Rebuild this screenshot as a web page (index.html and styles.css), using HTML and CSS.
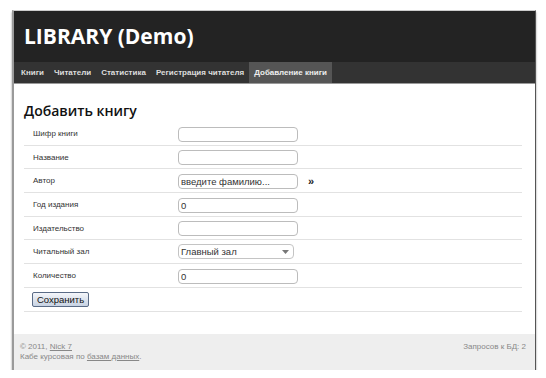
FILE: index.html
```html
<!DOCTYPE html>
<html>

<head>
	<meta charset="utf-8">
	<title>LIBRARY (Demo)</title>
	<link rel="stylesheet" href="styles.css">
</head>

<body>
	<div class="page">
		<div class="header">
			<h1>LIBRARY (Demo)</h1>
		</div>
		<ul class="menu">
			<li><a href="#">Книги</a></li>
			<li><a href="#">Читатели</a></li>
			<li><a href="#">Статистика</a></li>
			<li><a href="#">Регистрация читателя</a></li>
			<li class="active"><a href="#">Добавление книги</a></li>
		</ul>

		<div class="content">
			<h2>Добавить книгу</h2>
			<form>
				<table class="form">
					<tr>
						<td class="label">Шифр книги</td>
						<td><input type="text" class="field"></td>
					</tr>
					<tr>
						<td class="label">Название</td>
						<td><input type="text" class="field"></td>
					</tr>
					<tr>
						<td class="label">Автор</td>
						<td><input type="text" class="field" value="введите фамилию..."><span class="more">»</span></td>
					</tr>
					<tr>
						<td class="label">Год издания</td>
						<td><input type="text" class="field" value="0"></td>
					</tr>
					<tr>
						<td class="label">Издательство</td>
						<td><input type="text" class="field"></td>
					</tr>
					<tr>
						<td class="label">Читальный зал</td>
						<td>
							<div class="select">
								<span>Главный зал</span>
								<svg width="7" height="4" viewBox="0 0 7 4"><path d="M0 0h7L3.5 4z" fill="#777"/></svg>
							</div>
						</td>
					</tr>
					<tr>
						<td class="label">Количество</td>
						<td><input type="text" class="field" value="0"></td>
					</tr>
					<tr>
						<td class="label btn-cell" colspan="2"><button type="button" class="save">Сохранить</button></td>
					</tr>
				</table>
			</form>
		</div>

		<div class="footer">
			<div class="left">
				© 2011, <a href="#">Nick 7</a><br>
				Кабе курсовая по <a href="#">базам данных</a>.
			</div>
			<div class="right">Запросов к БД: 2</div>
		</div>
	</div>
</body>

</html>
```

FILE: styles.css
```css
body {
	margin: 0;
	background-color: white;
	font-family: 'Liberation Sans', Arial, sans-serif;
}

.page {
	width: 521px;
	margin: 10px 0 0 12px;
	border-left: 2px solid #9a9a9a;
	border-right: 1px solid #555;
	border-top: 1px solid #ccc;
	box-shadow: 0 2px 2px #999;
}

.header {
	background-color: #232323;
	height: 51px;
	padding-left: 10px;
}

h1 {
	margin: 0;
	font-family: 'Open Sans', sans-serif;
	font-weight: bold;
	font-size: 21px;
	line-height: 51px;
	color: white;
}

.menu {
	display: flex;
	margin: 0;
	padding: 0 0 0 2px;
	list-style: none;
	height: 21px;
	background-color: #333;
	border-bottom: 1px solid #999;
}

.menu a {
	display: block;
	padding: 0 5px;
	line-height: 21px;
	font-size: 8px;
	font-weight: bold;
	color: #ddd;
	text-decoration: none;
}

.menu .active a {
	background-color: #555;
	color: #eee;
}

.content {
	padding: 18px 13px 22px 10px;
}

h2 {
	margin: 0 0 2px 0;
	font-family: 'Open Sans', sans-serif;
	font-weight: 600;
	font-size: 14px;
	line-height: 18px;
	color: #111;
}

.form {
	width: 100%;
	border-collapse: collapse;
}

.form td {
	height: 22.7px;
	padding: 0;
	border-bottom: 1px solid #e2e2e2;
	vertical-align: middle;
}

.label {
	width: 145px;
	padding-left: 9px !important;
	font-size: 8px;
	color: #333;
}

.field {
	box-sizing: border-box;
	width: 120px;
	height: 15px;
	margin: 0;
	padding: 0 2px;
	border: 1px solid #bcbcbc;
	border-radius: 4px;
	font-family: 'Liberation Sans', Arial, sans-serif;
	font-size: 9.5px;
	color: #333;
	vertical-align: middle;
}

.more {
	margin-left: 10px;
	font-size: 11px;
	font-weight: bold;
	color: #222;
	vertical-align: middle;
}

.select {
	box-sizing: border-box;
	display: flex;
	align-items: center;
	justify-content: space-between;
	width: 116px;
	height: 15px;
	padding: 0 4px 0 2px;
	border: 1px solid #c4c4c4;
	border-radius: 4px;
	font-size: 9.5px;
	color: #333;
}

.btn-cell {
	padding-left: 8px !important;
}

.save {
	box-sizing: border-box;
	width: 57px;
	height: 15px;
	padding: 0;
	border: 1px solid #5a6b86;
	border-radius: 2px;
	background: linear-gradient(#f4f6fa, #c7d2e2);
	font-family: 'Liberation Sans', Arial, sans-serif;
	font-size: 9.5px;
	color: #111;
	vertical-align: middle;
}

.footer {
	display: flex;
	justify-content: space-between;
	background-color: #eee;
	padding: 8px 9px 8px 6px;
	font-size: 8px;
	line-height: 10px;
	color: #888;
}

.footer a {
	color: #888;
}
```
